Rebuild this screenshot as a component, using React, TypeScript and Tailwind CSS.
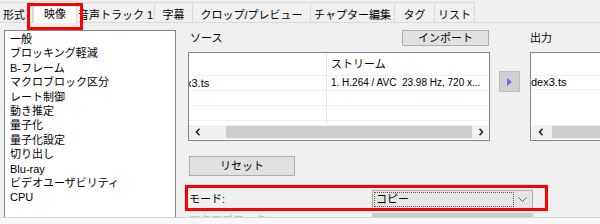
const tabs = [
  { label: '形式', w: 'w-[33px]', first: true },
  { label: '映像', w: 'w-[44px]', active: true },
  { label: '音声トラック 1', w: 'w-[78px]' },
  { label: '字幕', w: 'w-[38px]' },
  { label: 'クロップ/プレビュー', w: 'w-[118px]' },
  { label: 'チャプター編集', w: 'w-[84px]' },
  { label: 'タグ', w: 'w-[40px]' },
  { label: 'リスト', w: 'w-[40px]' },
]

const sections = [
  '一般',
  'ブロッキング軽減',
  'B-フレーム',
  'マクロブロック区分',
  'レート制御',
  '動き推定',
  '量子化',
  '量子化設定',
  '切り出し',
  'Blu-ray',
  'ビデオユーザビリティ',
  'CPU',
]

function Chevron({ dir }: { dir: 'left' | 'right' }) {
  return (
    <svg width="6" height="8" viewBox="0 0 6 8" className="block">
      {dir === 'left' ? (
        <polyline points="4.5,0.8 1.5,4 4.5,7.2" fill="none" stroke="#222" strokeWidth="1.6" />
      ) : (
        <polyline points="1.5,0.8 4.5,4 1.5,7.2" fill="none" stroke="#222" strokeWidth="1.6" />
      )}
    </svg>
  )
}

function ScrollBar({ children }: { children: React.ReactNode }) {
  return <div className="h-[14px] shrink-0 flex items-stretch bg-[#f0f0f0]">{children}</div>
}

export default function App() {
  return (
    <div className="w-[600px] h-[224px] bg-[#f0f0f0] overflow-hidden relative text-black text-[11px] font-['Liberation_Sans','Noto_Sans_CJK_JP',sans-serif]">
      {/* tab strip */}
      <div className="h-[23px] flex items-end border-b border-[#d9d9d9]">
        {tabs.map((t) => (
          <div
            key={t.label}
            className={
              t.active
                ? 'w-[44px] h-[22px] -mb-px bg-white border border-b-0 border-[#d9d9d9] flex items-center justify-center pt-[3px] relative'
                : `${t.w} h-[20px] bg-[#f0f0f0] border-t border-r border-[#d9d9d9] flex items-center whitespace-nowrap overflow-hidden pt-[5px] ${
                    t.first ? 'pl-[3px]' : 'justify-center'
                  }`
            }
          >
            {t.label}
          </div>
        ))}
      </div>

      {/* body */}
      <div className="h-[194px] flex overflow-hidden">
        <div className="pl-[4px] pt-[7px] shrink-0">
          <div className="w-[172px] h-[200px] bg-white border border-[#828790] pl-[5px] pt-[1px]">
            {sections.map((s) => (
              <div key={s} className="leading-[14.4px] whitespace-nowrap">
                {s}
              </div>
            ))}
          </div>
        </div>

        <div className="ml-[12px] pt-[7px] flex flex-col shrink-0">
          <div className="flex shrink-0">
            {/* source */}
            <div className="w-[302px]">
              <div className="h-[22px] flex items-start">
                <span className="pl-[2px] leading-[14px] mt-[1px]">ソース</span>
                <button className="ml-auto mr-[1px] w-[87px] h-[16px] bg-[#e1e1e1] border border-[#adadad] flex items-center justify-center leading-none">
                  インポート
                </button>
              </div>
              <div className="h-[89px] border border-[#828790] bg-white flex flex-col">
                <div className="flex-1 overflow-hidden flex">
                  <div className="w-[138px] border-r border-[#e6e6e6] flex flex-col">
                    <div className="h-[22px] shrink-0" />
                    <div className="h-[15px] shrink-0 border-t border-[#f0f0f0] flex items-center overflow-hidden">
                      <span className="-ml-[3px] leading-none">x3.ts</span>
                    </div>
                    <div className="h-[15px] shrink-0 border-t border-[#f0f0f0]" />
                    <div className="h-[16px] shrink-0 border-t border-[#f0f0f0] border-b" />
                  </div>
                  <div className="flex-1 flex flex-col min-w-0">
                    <div className="h-[22px] shrink-0 flex items-center pl-[4px]">ストリーム</div>
                    <div className="h-[15px] shrink-0 border-t border-[#f0f0f0] flex items-center pl-[4px] whitespace-pre text-[10px] leading-none overflow-hidden">
                      1. H.264 / AVC  23.98 Hz, 720 x...
                    </div>
                    <div className="h-[15px] shrink-0 border-t border-[#f0f0f0]" />
                    <div className="h-[16px] shrink-0 border-t border-[#f0f0f0] border-b" />
                  </div>
                </div>
                <ScrollBar>
                  <div className="w-[17px] flex items-center justify-center">
                    <Chevron dir="left" />
                  </div>
                  <div className="w-[20px]" />
                  <div className="flex-1 bg-[#cdcdcd] my-[1px]" />
                  <div className="w-[17px] flex items-center justify-center">
                    <Chevron dir="right" />
                  </div>
                </ScrollBar>
                <div className="h-[1px] shrink-0" />
              </div>
            </div>

            {/* move button */}
            <div className="w-[40px] pl-[9px] pt-[41px]">
              <div className="w-[21px] h-[21px] bg-[#cfcfcf] border border-[#bdbdbd] flex items-center justify-center">
                <svg width="5" height="8" viewBox="0 0 5 8">
                  <polygon points="0,0 5,4 0,8" fill="#6a6af0" />
                </svg>
              </div>
            </div>

            {/* output */}
            <div className="w-[90px]">
              <div className="h-[22px] leading-[14px] pt-[1px]">出力</div>
              <div className="h-[89px] border border-r-0 border-[#828790] bg-white flex flex-col">
                <div className="flex-1 overflow-hidden flex flex-col">
                  <div className="h-[22px] shrink-0" />
                  <div className="h-[15px] shrink-0 border-t border-b border-[#f0f0f0] flex items-center">
                    <span className="leading-none">dex3.ts</span>
                  </div>
                </div>
                <ScrollBar>
                  <div className="w-[19px] flex items-center justify-center">
                    <Chevron dir="left" />
                  </div>
                  <div className="flex-1 bg-[#cdcdcd] my-[1px] ml-[2px]" />
                </ScrollBar>
                <div className="h-[1px] shrink-0" />
              </div>
            </div>
          </div>

          <button className="mt-[15px] ml-[1px] shrink-0 w-[106px] h-[20px] bg-[#e1e1e1] border border-[#adadad] flex items-center justify-center leading-none">
            リセット
          </button>

          <div className="mt-[14px] shrink-0 flex items-center h-[19px]">
            <span className="w-[184px] pl-[1px] leading-none">モード:</span>
            <div className="w-[161px] h-[19px] bg-[#e5e5e5] border border-[#adadad] flex items-stretch p-[1px]">
              <div className="flex-1 border border-dotted border-[#555] flex items-center pl-[1px] leading-none">
                コピー
              </div>
              <div className="w-[17px] flex items-center justify-center">
                <svg width="9" height="5" viewBox="0 0 9 5">
                  <polyline points="0.5,0.5 4.5,4.5 8.5,0.5" fill="none" stroke="#606060" strokeWidth="1" />
                </svg>
              </div>
            </div>
          </div>

          <div className="mt-[4px] shrink-0 flex items-start h-[10px]">
            <span className="w-[184px] pl-[1px] text-[#c4c4c4] leading-[14px]">マクロブロック:</span>
            <div className="w-[161px] h-[4px] bg-[#cccccc]" />
          </div>
        </div>
      </div>

      <div className="h-[7px] border-t border-[#d4d4d4] bg-[#f8f8f8]" />

      {/* highlight boxes */}
      <div className="absolute left-[27px] top-[3px] w-[56px] h-[27px] border-[3px] border-[#ff0000]" />
      <div className="absolute left-[185px] top-[185px] w-[363px] h-[26px] border-[3px] border-[#ff0000]" />
    </div>
  )
}
